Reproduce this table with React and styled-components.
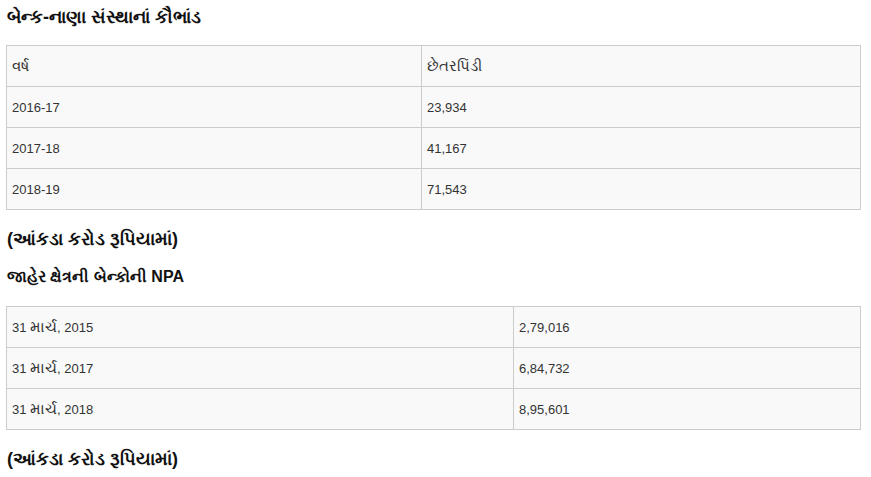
import React from "react";
import styled, { createGlobalStyle } from "styled-components";

const GlobalStyle = createGlobalStyle`
  html, body {
    margin: 0;
    padding: 0;
    background: #fff;
  }
  body {
    font-family: "Liberation Sans", Arial, "Noto Sans", sans-serif;
    color: #333;
  }
`;

const fraud = [
  ["2016-17", "23,934"],
  ["2017-18", "41,167"],
  ["2018-19", "71,543"],
];

const npa = [
  ["2015", "2,79,016"],
  ["2017", "6,84,732"],
  ["2018", "8,95,601"],
];

const App = () => {
  return (
    <React.Fragment>
      <GlobalStyle />
      <Page>
        <Title>બેન્ક-નાણા સંસ્થાનાં કૌભાંડ</Title>
        <Table>
          <colgroup>
            <col style={{ width: "415px" }} />
            <col />
          </colgroup>
          <tbody>
            <tr>
              <Cell><Gu>વર્ષ</Gu></Cell>
              <Cell><Gu>છેતરપિંડી</Gu></Cell>
            </tr>
            {fraud.map((r) => (
              <tr key={r[0]}>
                <Cell>{r[0]}</Cell>
                <Cell>{r[1]}</Cell>
              </tr>
            ))}
          </tbody>
        </Table>
        <Note>(આંકડા કરોડ રૂપિયામાં)</Note>
        <SubTitle>જાહેર ક્ષેત્રની બેન્કોની NPA</SubTitle>
        <Table second>
          <colgroup>
            <col style={{ width: "507px" }} />
            <col />
          </colgroup>
          <tbody>
            {npa.map((r) => (
              <tr key={r[0]}>
                <Cell>
                  31 <Gu>માર્ચ</Gu>, {r[0]}
                </Cell>
                <Cell>{r[1]}</Cell>
              </tr>
            ))}
          </tbody>
        </Table>
        <Note>(આંકડા કરોડ રૂપિયામાં)</Note>
      </Page>
    </React.Fragment>
  );
};

export default App;

const Page = styled.div`
  width: 855px;
  padding: 0 0 0 6px;
`;

const Title = styled.h2`
  margin: 0;
  padding: 7px 0 0 1px;
  height: 38px;
  box-sizing: border-box;
  font-size: 18px;
  font-weight: bold;
  color: #111;
`;

const Table = styled.table`
  width: 855px;
  border-collapse: collapse;
  table-layout: fixed;
  background: #f9f9f9;
  margin-top: ${(props) => (props.second ? "17px" : "7px")};
`;

const Cell = styled.td`
  height: 41px;
  box-sizing: border-box;
  border: 1px solid #ccc;
  padding: 0 5px;
  font-size: 13px;
  color: #333;
  vertical-align: middle;
`;

const Gu = styled.span`
  font-size: 15px;
`;

const Note = styled.p`
  margin: 17px 0 0;
  padding-left: 1px;
  font-size: 18px;
  font-weight: bold;
  line-height: 24px;
  color: #111;
`;

const SubTitle = styled.h3`
  margin: 14px 0 0;
  padding-left: 1px;
  font-size: 16px;
  font-weight: bold;
  line-height: 24px;
  color: #111;
`;
